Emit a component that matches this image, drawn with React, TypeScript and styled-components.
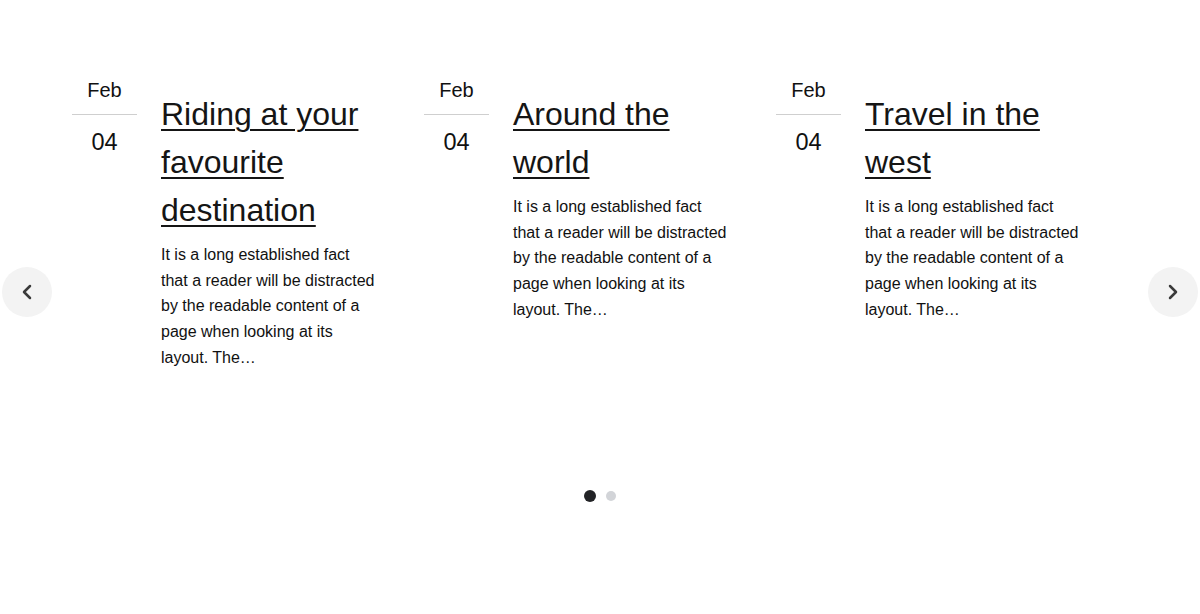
import React from "react";
import styled, { createGlobalStyle } from "styled-components";
import { ChevronLeft, ChevronRight } from "lucide-react";

const Global = createGlobalStyle`
  html, body { margin: 0; padding: 0; background: #fff; }
  body { font-family: "Liberation Sans", Arial, sans-serif; color: #111; }
`;

const Page = styled.section`
  position: relative;
  width: 1200px;
  height: 614px;
  padding-top: 78px;
  box-sizing: border-box;
`;

const Track = styled.div`
  display: flex;
  height: 400px;
  padding-left: 72px;
  overflow: hidden;
`;

const Slide = styled.article`
  flex: 0 0 352px;
  display: flex;
  gap: 24px;
  align-items: flex-start;
`;

const DateCol = styled.div`
  width: 65px;
  flex: 0 0 65px;
  text-align: center;
  color: #111;
`;

const Month = styled.div`
  font-size: 20px;
  line-height: 24px;
  padding-bottom: 12px;
  border-bottom: 1px solid #cfcfcf;
`;

const Day = styled.div`
  font-size: 23.5px;
  line-height: 26px;
  margin-top: 14px;
`;

const Content = styled.div`
  width: 218px;
  margin-top: 12px;
`;

const Title = styled.a`
  display: block;
  font-size: 32px;
  line-height: 48px;
  color: #151515;
  text-decoration: underline;
  text-decoration-thickness: 2px;
  text-underline-offset: 4px;
  cursor: pointer;
`;

const Excerpt = styled.p`
  margin: 8px 0 0;
  font-size: 16px;
  line-height: 25.7px;
  color: #111;
`;

const Arrow = styled.button<{ $side: "left" | "right" }>`
  position: absolute;
  top: 267px;
  ${(p) => (p.$side === "left" ? "left: 2px;" : "right: 2px;")}
  width: 50px;
  height: 50px;
  border: none;
  border-radius: 50%;
  background: #f3f3f3;
  color: #3a3a3a;
  display: flex;
  align-items: center;
  justify-content: center;
  padding: 0;
  cursor: pointer;
`;

const Dots = styled.div`
  display: flex;
  justify-content: center;
  align-items: center;
  gap: 10px;
  margin-top: 12px;
`;

const Dot = styled.span<{ $active?: boolean }>`
  width: ${(p) => (p.$active ? 12 : 10)}px;
  height: ${(p) => (p.$active ? 12 : 10)}px;
  border-radius: 50%;
  background: ${(p) => (p.$active ? "#222326" : "#d2d4d8")};
`;

const excerpt =
  "It is a long established fact that a reader will be distracted by the readable content of a page when looking at its layout. The\u2026";

const posts = [
  { month: "Feb", day: "04", title: "Riding at your favourite destination" },
  { month: "Feb", day: "04", title: "Around the world" },
  { month: "Feb", day: "04", title: "Travel in the west" },
];

export default function App() {
  return (
    <>
      <Global />
      <Page>
        <Track>
          {posts.map((p, i) => (
            <Slide key={i}>
              <DateCol>
                <Month>{p.month}</Month>
                <Day>{p.day}</Day>
              </DateCol>
              <Content>
                <Title>{p.title}</Title>
                <Excerpt>{excerpt}</Excerpt>
              </Content>
            </Slide>
          ))}
        </Track>
        <Dots>
          <Dot $active />
          <Dot />
        </Dots>
        <Arrow $side="left" aria-label="Previous">
          <ChevronLeft size={24} strokeWidth={2.5} />
        </Arrow>
        <Arrow $side="right" aria-label="Next">
          <ChevronRight size={24} strokeWidth={2.5} />
        </Arrow>
      </Page>
    </>
  );
}
